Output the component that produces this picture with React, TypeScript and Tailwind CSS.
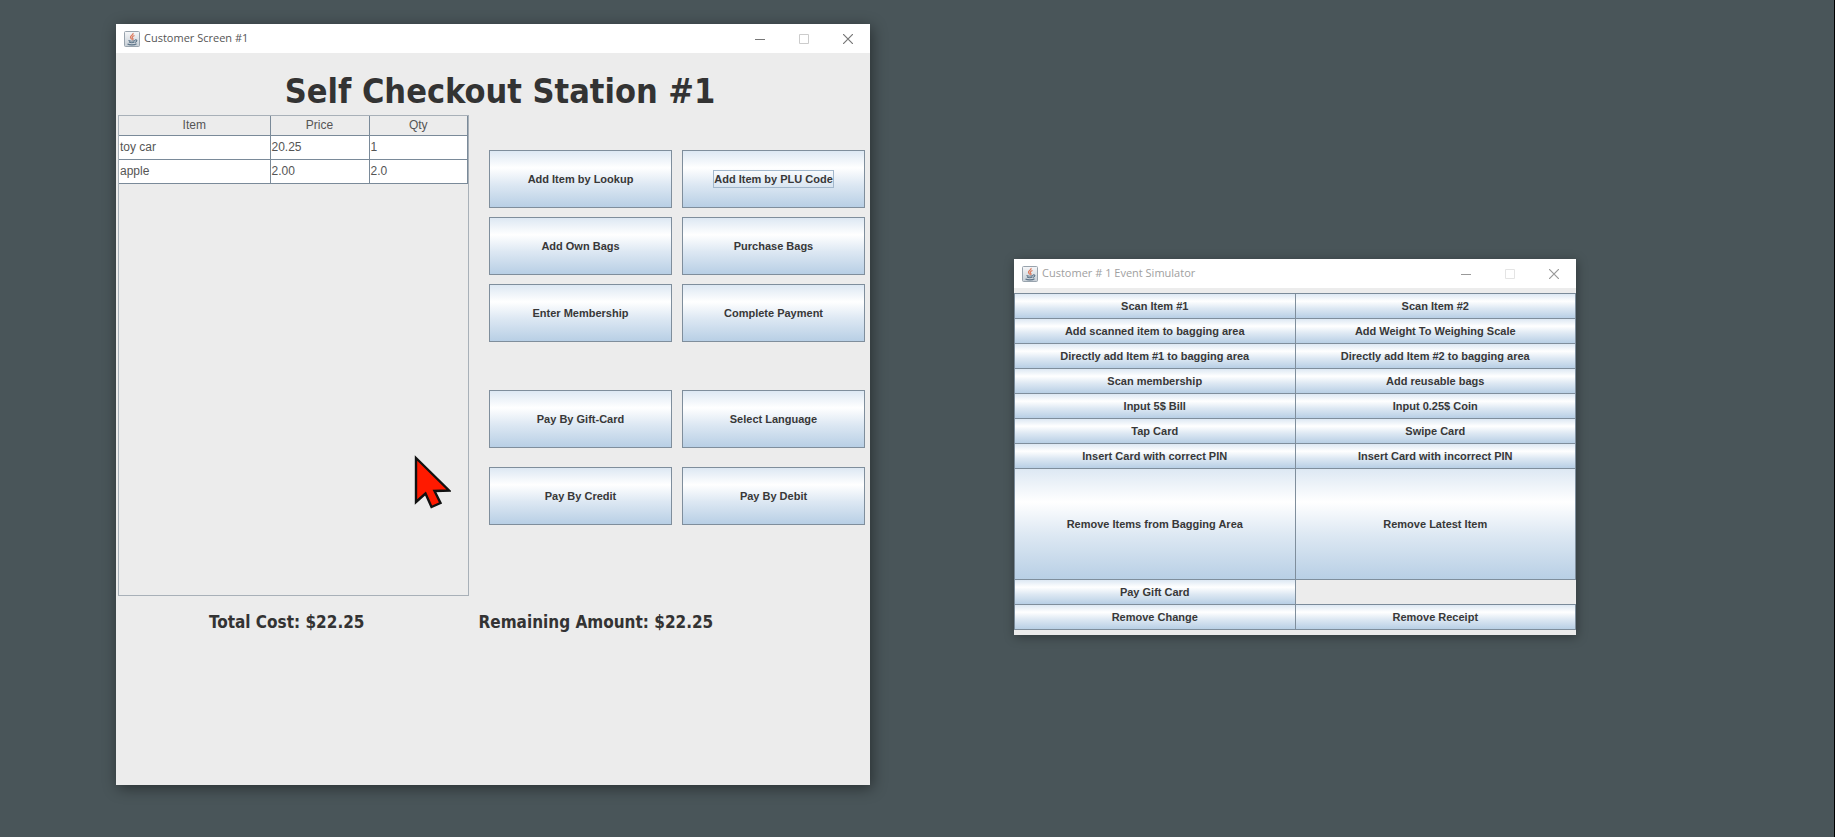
import type { ReactNode } from "react";

function JavaIcon() {
  return (
    <svg viewBox="0 0 32 32" className="size-4 shrink-0" aria-hidden="true">
      <defs>
        <linearGradient id="java-tile" x1="0" y1="0" x2="0" y2="1">
          <stop offset="0" stopColor="#f6f7f9" />
          <stop offset="1" stopColor="#c6ced5" />
        </linearGradient>
      </defs>
      <rect x="1" y="1" width="30" height="30" rx="2" fill="url(#java-tile)" stroke="#98a3ad" strokeWidth="2" />
      <path d="M18 4c2 4-6 5-5 9 .4 2 2 3 2.500 4M21 9c-4 1.500-6 3.500-3.500 6 1 1.200.5 2.500-.8 3.200" fill="none" stroke="#dd7a5d" strokeWidth="2.500" />
      <path d="M9 19c3 1.500 10 1.500 13 0M10 22c3 1.500 8 1.500 11 0M7 26c4 2.500 14 2.500 18-.5M22 18c5-1.500 5 3 0 5" fill="none" stroke="#5d7488" strokeWidth="2.200" />
    </svg>
  );
}

type WindowProps = {
  title: string;
  active: boolean;
  className: string;
  children: ReactNode;
};

function AppWindow({ title, active, className, children }: WindowProps) {
  return (
    <section
      aria-label={title}
      className={`absolute flex flex-col bg-[#ececec] ${className}`}
    >
      <header className="flex h-[29px] shrink-0 items-center bg-white pl-2">
        <JavaIcon />
        <h2 className={`ml-1 flex-1 font-['Open_Sans',sans-serif] text-[11px] ${active ? "text-[#555555]" : "text-[#a0a0a0]"}`}>
          {title}
        </h2>
        <div className={`flex h-full ${active ? "text-[#777777]" : "text-[#999999]"}`}>
          <button aria-label="Minimize" className="flex w-11 items-center justify-center">
            <svg viewBox="0 0 10 10" className="size-[10px]" stroke="currentColor">
              <path d="M0 5.500H10" />
            </svg>
          </button>
          <button aria-label="Maximize" disabled className={`flex w-11 items-center justify-center ${active ? "text-[#cccccc]" : "text-[#e4e4e4]"}`}>
            <svg viewBox="0 0 10 10" className="size-[10px]" stroke="currentColor" fill="none">
              <path d="M.5.5h9v9h-9z" />
            </svg>
          </button>
          <button aria-label="Close" className="flex w-11 items-center justify-center">
            <svg viewBox="0 0 10 10" className="size-[10px]" stroke="currentColor" strokeWidth="1.200">
              <path d="M0 0l10 10M10 0L0 10" />
            </svg>
          </button>
        </div>
      </header>
      {children}
    </section>
  );
}

function SwingButton({ label, className, focused }: { label: string; className: string; focused?: boolean }) {
  return (
    <button
      className={`flex items-center justify-center border-[#7f8e9c] bg-[linear-gradient(#dde8f3,#ffffff_30%,#dde8f3_60%,#b8cfe5)] text-[11px] leading-4 font-bold text-[#383838] ${className}`}
    >
      <span className={focused ? "outline outline-[#a3b8cc]" : ""}>{label}</span>
    </button>
  );
}

const items = [
  { name: "toy car", price: "20.25", qty: "1" },
  { name: "apple", price: "2.00", qty: "2.0" },
];

const mainActions = [
  "Add Item by Lookup",
  "Add Item by PLU Code",
  "Add Own Bags",
  "Purchase Bags",
  "Enter Membership",
  "Complete Payment",
];

const events = [
  "Scan Item #1",
  "Scan Item #2",
  "Add scanned item to bagging area",
  "Add Weight To Weighing Scale",
  "Directly add Item #1 to bagging area",
  "Directly add Item #2 to bagging area",
  "Scan membership",
  "Add reusable bags",
  "Input 5$ Bill",
  "Input 0.25$ Coin",
  "Tap Card",
  "Swipe Card",
  "Insert Card with correct PIN",
  "Insert Card with incorrect PIN",
  "Remove Items from Bagging Area",
  "Remove Latest Item",
  "Pay Gift Card",
  "",
  "Remove Change",
  "Remove Receipt",
];

const tallButton = "h-[58px] border";

function CustomerScreen() {
  return (
    <AppWindow
      title="Customer Screen #1"
      active
      className="top-6 left-[116px] min-h-[761px] w-[754px] shadow-[2px_3px_14px_rgba(0,0,0,0.45)]"
    >
      <h1 className="pt-[15px] pb-px pl-[14px] text-center font-['DejaVu_Sans_Condensed','DejaVu_Sans',sans-serif] text-[34px] leading-[46px] font-bold text-[#333333]">
        Self Checkout Station #1
      </h1>
      <div className="flex pr-[5px] pl-[2px]">
        <div className="h-[481px] w-[351px] border border-[#a8b0b8]">
          <table className="w-full table-fixed border-collapse text-xs text-[#555555]">
            <colgroup>
              <col className="w-[151px]" />
              <col className="w-[99px]" />
              <col />
            </colgroup>
            <thead>
              <tr className="h-[19px]">
                {["Item", "Price", "Qty"].map((h) => (
                  <th key={h} className="border-r border-b border-[#7a8a99] p-0 font-normal">{h}</th>
                ))}
              </tr>
            </thead>
            <tbody className="bg-white">
              {items.map((item) => (
                <tr key={item.name} className="h-6">
                  <td className="border-r border-b border-[#7a8a99] p-0 pl-px">{item.name}</td>
                  <td className="border-r border-b border-[#7a8a99] p-0 pl-px">{item.price}</td>
                  <td className="border-r border-b border-[#7a8a99] p-0 pl-px">{item.qty}</td>
                </tr>
              ))}
            </tbody>
          </table>
        </div>
        <div className="ml-5 flex-1 pt-[35px]">
          <div className="grid grid-cols-2 gap-x-[10px] gap-y-[9px]">
            {mainActions.map((label) => (
              <SwingButton key={label} label={label} className={tallButton} focused={label === "Add Item by PLU Code"} />
            ))}
          </div>
          <div className="mt-12 grid grid-cols-2 gap-x-[10px] gap-y-[19px]">
            {["Pay By Gift-Card", "Select Language", "Pay By Credit", "Pay By Debit"].map((label) => (
              <SwingButton key={label} label={label} className={tallButton} />
            ))}
          </div>
        </div>
      </div>
      <div className="flex gap-[114px] pt-[14px] pl-[93px] font-['DejaVu_Sans_Condensed','DejaVu_Sans',sans-serif] text-[17px] leading-6 font-bold text-[#333333]">
        <p>Total Cost: $22.25</p>
        <p>Remaining Amount: $22.25</p>
      </div>
    </AppWindow>
  );
}

function EventSimulator() {
  return (
    <AppWindow
      title="Customer # 1 Event Simulator"
      active={false}
      className="top-[259px] left-[1014px] w-[562px] pb-[5px] shadow-[1px_2px_10px_rgba(0,0,0,0.35)]"
    >
      <div className="mt-[5px] grid grid-cols-2 grid-rows-[repeat(7,25px)_111px_25px_25px] border-t border-l border-[#7a8a99]">
        {events.map((label, i) =>
          label ? (
            <SwingButton key={label} label={label} className="border-r border-b" />
          ) : (
            <div key={i} className="border-b border-[#7a8a99]" />
          ),
        )}
      </div>
    </AppWindow>
  );
}

export default function App() {
  return (
    <main className="relative min-h-screen overflow-hidden border-r border-black bg-[#495559] font-['Liberation_Sans',Arial,sans-serif]">
      <CustomerScreen />
      <EventSimulator />
      <svg viewBox="0 0 37 54" className="absolute top-[455px] left-[414px] h-[54px] w-[37px]" aria-hidden="true">
        <path d="M2 3V47L11.500 38.500L17.500 52L26.500 48L20.500 36L35 35.500Z" fill="#ff1a00" stroke="#111111" strokeWidth="2.400" />
      </svg>
    </main>
  );
}
